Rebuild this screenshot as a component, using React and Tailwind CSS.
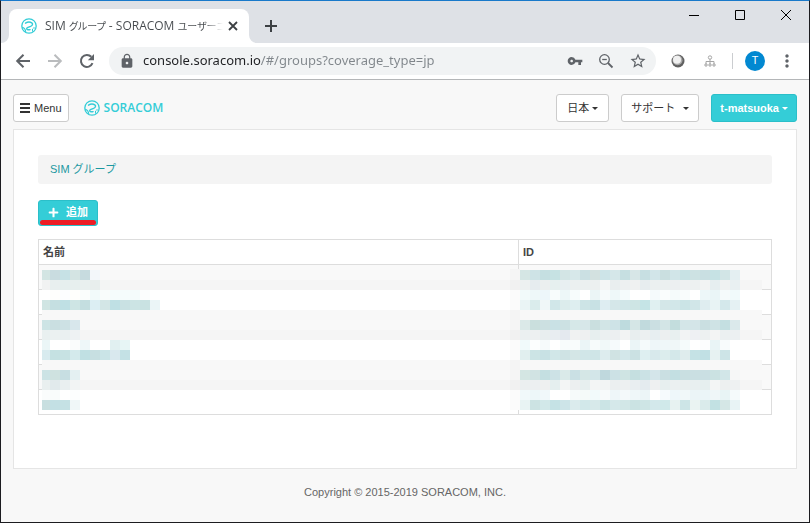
import React from 'react';
import { MdLock, MdVpnKey, MdStarBorder, MdMoreVert } from 'react-icons/md';
import { FaPlus } from 'react-icons/fa';

const JP = "font-['Liberation_Sans','Noto_Sans_CJK_JP',sans-serif]";

function SoracomMark() {
  return (
    <svg viewBox="0 0 16 16" className="size-4 shrink-0" fill="none" stroke="#34cdd7" strokeLinecap="round" aria-hidden="true">
      <circle cx="8" cy="8" r="7.2" strokeWidth="1.3" />
      <path d="M4.500 5.200C6.300 4 9.300 3.900 10.800 4.900c1.500 1.200.6 2.700-1.200 3.500L6.400 9.700c-1.200.7-.8 1.900.4 2 .9.1 1.600.1 2.300-.1" strokeWidth="1.400" />
      <path d="M1.500 9.300c1.900.6 3 2.200 3.300 4.700" strokeWidth="1.100" />
      <path d="M11.500 11.200v2M13 9.500v1" strokeWidth="1" />
    </svg>
  );
}

function StrokeIcon({ d, className, width = 1.8 }) {
  return (
    <svg viewBox="0 0 20 20" className={className} fill="none" stroke="currentColor" strokeWidth={width} aria-hidden="true">
      <path d={d} />
    </svg>
  );
}

function Caret() {
  return <span className="border-x-[3px] border-t-[3px] border-x-transparent border-t-current" />;
}

function TabStrip() {
  return (
    <div className="flex h-[42px] items-end bg-[#dee1e6]">
      <svg className="size-2 shrink-0" viewBox="0 0 8 8" fill="#fff" aria-hidden="true">
        <path d="M8 0v8H0a8 8 0 0 0 8-8z" />
      </svg>
      <div className="flex h-[34px] w-60 min-w-0 items-center rounded-t-lg bg-white px-3">
        <SoracomMark />
        <div className="ml-2 w-[178px] shrink-0 whitespace-nowrap bg-gradient-to-r from-[#45494d] from-90% to-transparent bg-clip-text font-['Open_Sans','Noto_Sans_CJK_JP',sans-serif] text-[12px] text-transparent [font-feature-settings:'palt']">
          SIM <span className="text-[10px]">グループ</span> - SORACOM <span className="text-[10px]">ユーザーコ</span>
        </div>
        <button type="button" aria-label="タブを閉じる" className="text-[#3c4043]">
          <StrokeIcon className="size-5" d="M6 6l8 8M14 6l-8 8" />
        </button>
      </div>
      <svg className="size-2 shrink-0" viewBox="0 0 8 8" fill="#fff" aria-hidden="true">
        <path d="M0 0v8h8a8 8 0 0 1-8-8z" />
      </svg>
      <button type="button" aria-label="新しいタブ" className="mb-[7px] ml-1 text-[#3c4043]">
        <StrokeIcon className="size-5" width={2} d="M10 4v12M4 10h12" />
      </button>
      <div className="ml-auto flex self-start text-black">
        <button type="button" aria-label="最小化" className="flex h-7 w-[46px] items-center justify-center">
          <svg viewBox="0 0 10 10" className="size-2.5" stroke="currentColor" aria-hidden="true">
            <path d="M0 5.500h10" />
          </svg>
        </button>
        <button type="button" aria-label="最大化" className="flex h-7 w-[46px] items-center justify-center">
          <svg viewBox="0 0 10 10" className="size-2.5" stroke="currentColor" fill="none" aria-hidden="true">
            <path d="M.5.5h9v9h-9z" />
          </svg>
        </button>
        <button type="button" aria-label="閉じる" className="flex h-7 w-[46px] items-center justify-center">
          <svg viewBox="0 0 10 10" className="size-2.5" stroke="currentColor" aria-hidden="true">
            <path d="M0 0l10 10M10 0L0 10" />
          </svg>
        </button>
      </div>
    </div>
  );
}

function Toolbar() {
  return (
    <div className="flex h-[37px] items-center border-b border-[#b4b6b8] bg-white pl-3 pr-3 text-[#5f6368]">
      <button type="button" aria-label="戻る">
        <StrokeIcon className="size-5" width={2} d="M17 10H4.500M10.500 3.700L4.200 10l6.300 6.300" />
      </button>
      <button type="button" aria-label="進む" className="ml-3 text-[#babcbe]">
        <StrokeIcon className="size-5" width={2} d="M3 10h12.500M9.500 3.700l6.300 6.300-6.300 6.300" />
      </button>
      <button type="button" aria-label="再読み込み" className="ml-3">
        <svg viewBox="0 0 20 20" className="size-5" aria-hidden="true">
          <path d="M15.500 12.200A6 6 0 1 1 14.300 5.800" fill="none" stroke="currentColor" strokeWidth="2" />
          <path d="M17 3v6.200h-6.200z" fill="currentColor" />
        </svg>
      </button>
      <div className="ml-3 flex h-7 min-w-0 flex-1 items-center rounded-full bg-[#f1f3f4] pl-2.5 pr-[9px]">
        <MdLock className="size-4 shrink-0" />
        <input
          type="text"
          aria-label="アドレス"
          defaultValue="console.soracom.io/#/groups?coverage_type=jp"
          className="ml-2 min-w-0 flex-1 bg-gradient-to-r from-[#202124] from-[118px] to-[#80868b] to-[118px] bg-clip-text font-['Noto_Sans',sans-serif] text-[13px] text-transparent outline-none"
        />
        <div className="flex shrink-0 items-center gap-[15px]">
          <button type="button" aria-label="パスワード">
            <MdVpnKey className="size-4" />
          </button>
          <button type="button" aria-label="ズーム">
            <svg viewBox="0 0 16 16" className="size-4" fill="none" stroke="currentColor" strokeWidth="1.300" aria-hidden="true">
              <circle cx="6.500" cy="6.500" r="4.800" />
              <path d="M10 10l4.500 4.500" strokeWidth="1.800" />
              <path d="M4.200 6.500h4.600" />
            </svg>
          </button>
          <button type="button" aria-label="ブックマーク">
            <MdStarBorder className="size-[18px]" />
          </button>
        </div>
      </div>
      <button type="button" aria-label="拡張機能" className="ml-3.5">
        <svg viewBox="0 0 16 16" className="size-4" aria-hidden="true">
          <circle cx="8" cy="8" r="6.500" fill="#606060" />
          <circle cx="7.500" cy="7.200" r="5" fill="#a8a8a8" />
          <circle cx="7" cy="6.700" r="4" fill="#f0f0f0" />
        </svg>
      </button>
      <button type="button" aria-label="サイト構成" className="ml-4">
        <svg viewBox="0 0 16 16" className="size-4" fill="none" stroke="#a6a6a6" aria-hidden="true">
          <circle cx="8" cy="4.500" r="1.700" />
          <path d="M8 6v5M4 11V8.500h8V11" />
          <path d="M3 11h2v2H3zM7 11h2v2H7zM11 11h2v2h-2z" />
        </svg>
      </button>
      <div className="ml-3.5 h-4 w-px bg-[#cbcdd0]" />
      <button
        type="button"
        className="ml-3 size-5 rounded-full bg-[#0288d1] font-[Roboto,sans-serif] text-[11px] leading-5 text-white"
      >
        T
      </button>
      <button type="button" aria-label="メニュー" className="ml-3">
        <MdMoreVert className="size-5" />
      </button>
    </div>
  );
}

const MENU_BUTTON = 'flex h-7 items-center rounded-[3px] border border-[#ccc] bg-white text-[#333]';

function SiteHeader() {
  return (
    <header className="flex items-center pt-[14px] pb-[7px]">
      <button type="button" className={`${MENU_BUTTON} gap-1 px-[6px]`}>
        <svg viewBox="0 0 10 10" className="size-2.5" stroke="currentColor" strokeWidth="2" aria-hidden="true">
          <path d="M0 1h10M0 5h10M0 9h10" />
        </svg>
        Menu
      </button>
      <a href="#/" className="ml-[15px] flex items-center gap-1 font-['Open_Sans',sans-serif] text-[12px] font-semibold text-[#34cdd7]">
        <SoracomMark />
        SORACOM
      </a>
      <div className="ml-auto flex gap-3">
        <button type="button" aria-haspopup="true" className={`${MENU_BUTTON} gap-[3px] px-[10px]`}>
          日本
          <Caret />
        </button>
        <button type="button" aria-haspopup="true" className={`${MENU_BUTTON} gap-2 px-[9px]`}>
          サポート
          <Caret />
        </button>
        <button
          type="button"
          aria-haspopup="true"
          className="flex h-7 items-center gap-[3px] rounded-[3px] border border-[#2bbfc9] bg-[#34cdd7] px-2 font-bold text-white"
        >
          t-matsuoka
          <Caret />
        </button>
      </div>
    </header>
  );
}

const BANDS = [
  '#f9f9f9', '#f5f5f5', '#ffffff', '#ffffff', '#f8f8f8', '#f9f9f9', '#f5f5f5',
  '#ffffff', '#ffffff', '#f8f8f8', '#f9f9f9', '#f5f5f5', '#ffffff', '#ffffff',
];

const NAME_CELLS = [
  'd3e5e3 c9dce0 c6e1e5 d4e4e3 c7dbdf f3f7fa',
  'f1f2f2 e8efef e6efee e7efee e9f0ef e8eeed f3f5f4',
  'ffffff fefefc fcfdff fffffc fafdfc f2fafa f9fcfb f5fcfc f5fcfc f4fbfb fbfdfd',
  'd0e5e3 c5dfe1 bfe0e4 cee5e4 c4dee0 dceef3 d3e6e6 bfe0e4 c9e1e3 cce4e4 c9e2e2 ebf5f7',
  '',
  'cde4e5 cadfe1 cde1e4 d8e7ec',
  'e9f0f0 ebf1f1 eaf0f1 eef2f3',
  'ebf6f7 ffffff ffffff fafcfc eef7f9 ffffff ffffff e1f0f1 e7f5f5',
  'd8ebef c5e1e2 c7e2e3 d4eaec c0e0e3 c7dfe1 cae4e7 d9e8ee c4e1e5',
  '',
  'cce3e5 cfe2e0 c7dee2 e4f0f2',
  'e9efef e1eaec e9eff0 f2f4f4',
  'fafcfc f9fcfb ffffff fcfefe',
  'c8dfe0 c3e0e4 c5e1e4 f0f7f8',
];

const ID_CELLS = [
  'd5e6e4 cee3e6 c5dfe1 c6e2e3 d3e5e5 d7e8ea cbe0e3 d3e1e0 cde4e8 d5e7e9 c6dfe1 d7e6e7 c7dfe2 d2e5e9 cadfe0 d1e5e8 c8e2e4 cde2e3 c9dfe2 c6e2e4 d2e5e6 e4eff2',
  'edf1f1 e6ecef ebefef e6f0ef e8eff2 ebf0f0 ebf0f0 ecf0f0 f4f6f6 e9eeef edf0f1 eff1f1 e7edef ebf0f0 ebf0f0 eceff1 eef1f2 edf1f1 f2f3f3 e6eef0 eff2f2 e9f0f2',
  'f2fafa eef8f9 edf6fa f8fcfc edf7f8 f7fcfc ffffff ebf5f6 f6fafb eef8f9 f5fbfc ffffff ffffff f5fafc fafdfd f5fbfb f9fcfc ffffff edf7f9 eaf5f7 f5fafb f1fafb',
  'eaf4f5 daecec f0f7f8 d1e7e9 dcecec deeef0 cde4e6 c8e1e4 deedf2 d5e7e9 d1e6e8 cee5e4 c5e4e6 e0f0f1 d4e7e8 d2e7e9 cbe4e6 d1e6e8 dfedf0 e8f3f4 d4e8eb e5f1f3',
  '',
  'dbe9e8 cadfdd cce0e1 c9e1e5 cce1e3 d6e8e8 d7e7e9 cadfdf d2e5e6 cee3e7 bedbde d5e6e6 c1dadd cbdfe2 d3e5e6 c3dddd d4e6e8 d4e5e8 cadfe1 cfe3e5 c4dfe1 dbe9eb',
  'ebf0f1 edf0f1 e8eeef e8edf1 e4e9ef f0f2f2 eef0f1 e7efef ebf0f1 eceff1 f2f3f3 e8eeef ecf0f1 e7eef1 eceff0 e8f0f0 f2f3f4 eef0f3 edf1f1 f3f4f4 ebf0f1 ecf0f2',
  'f1fafb fcfefe f6fafb ffffff f8fcfc f9fcfc ebf5f7 f7fbfb f1f9f9 f6fafc ffffff ebf5f7 f5fafb eef6f9 eff7f9 f0f7f8 f5fbfb ffffff fcfdfe e9f4f6 f8fbfc',
  'e1efef cce4e5 c8e1e4 d1e7e8 cfe3e4 d4e6e6 d1e6e8 cfe5e7 ddecee d0e3e3 d3e7ea cbe1e3 deeff1 d8e9ec dceded d4e8ea dfeced c5e2e5 c1e0e4 e7f2f2 cde4e7',
  '',
  'd4e6e3 d1e3e3 c4dfe1 cde2e6 daeae9 cae0e4 d5e7e6 d3e6e9 bfd8dd cce1e5 cfe4e3 c5dfe0 cbe2e5 d4e5ea cadfe2 c3dfe2 c9dfe1 cadfe2 cadfe3 cbe2e2 d2e6e8 f6f7f7',
  'ebeff0 eceff1 eef0f0 e5efef f3f5f5 eceff0 e7efef f3f5f5 f2f4f4 ebeff0 edf0f1 e9eef1 e4ebef eef0f1 e7efef ebf0f1 e9efef e8eff0 e6efef f3f5f5 edf0f0 eef1f2',
  'f1f9fa edf7f9 f1f8fa ffffff ffffff f6fafa f5faf9 f2fafb f8fafb eef6f9 f4f9fa eff7f9 ecf5f7 ffffff f6fafd eef7fa f1f8f9 ebf4f7 ebf5f8 eff6f8 e8f4f5 f5fafb',
  'e8f3f3 cce3e3 d2e8e9 c5e2e5 cde4e8 dbebed d2e8ea d7e9ea cbe4e5 d5e8ea d2e7e7 cbe3e3 cee5e5 d3e8eb d0e9ea e7f2f1 cde5e7 eaf3f2 daebeb c2e1e3 d5e7e6 e8f3f5',
];

const cellsOf = (row) => (row ? row.split(' ') : []);

/* Pixelated cover that hides the group names and their IDs. */
function Mosaic() {
  return (
    <svg
      viewBox="0 0 720 141"
      preserveAspectRatio="none"
      shapeRendering="crispEdges"
      className="absolute left-1 right-[10px] top-[30px] h-[141px] w-[calc(100%-14px)]"
      aria-hidden="true"
    >
      {BANDS.map((fill, i) => (
        <g key={i}>
          <rect x="0" y={i === 0 ? 0 : i * 10 + 1} width="720" height={i === 0 ? 11 : 10} fill={fill} />
          <rect x="468" y={i === 0 ? 0 : i * 10 + 1} width="10" height={i === 0 ? 11 : 10} fill="#000" opacity="0.014" />
          {cellsOf(NAME_CELLS[i]).map((c, k) => (
            <rect key={k} x={k === 0 ? 0 : k * 10 - 2} y={i * 10 + 1} width={k === 0 ? 8 : 10} height="10" fill={`#${c}`} />
          ))}
          {cellsOf(ID_CELLS[i]).map((c, k) => (
            <rect key={`d${k}`} x={478 + k * 10} y={i * 10 + 1} width="10" height="10" fill={`#${c}`} />
          ))}
        </g>
      ))}
    </svg>
  );
}

function GroupTable() {
  return (
    <div className="relative mt-[13px]">
      <table className="w-full table-fixed border-collapse text-left text-[#444]">
        <thead>
          <tr className="h-[25px]">
            <th scope="col" className="w-[480px] border border-[#ddd] px-1 py-0">
              名前
            </th>
            <th scope="col" className="border border-[#ddd] px-1 py-0">
              ID
            </th>
          </tr>
        </thead>
        <tbody>
          {[0, 1, 2, 3, 4, 5].map((n) => (
            <tr key={n} className="h-[25px] odd:bg-[#f9f9f9]">
              <td className="border border-[#ddd] p-0" />
              <td className="border border-[#ddd] p-0" />
            </tr>
          ))}
        </tbody>
      </table>
      <Mosaic />
    </div>
  );
}

export default function App() {
  return (
    <div className="flex min-h-screen flex-col border border-[#1c1c20] border-t-[#1979ca] bg-[#f8f8f8]">
      <TabStrip />
      <Toolbar />
      <div className={`px-3 text-[11px] leading-4 ${JP}`}>
        <SiteHeader />
        <main className="border border-[#e5e5e5] bg-white px-6 pb-[53px] pt-[25px]">
          <nav aria-label="パンくず" className="flex h-[29px] items-center rounded-[3px] bg-[#f4f4f4] px-3 pb-0.5">
            <a href="#/groups" className="text-[#1b98a1]">
              SIM グループ
            </a>
          </nav>
          <div className="relative mt-4 w-fit">
            <button
              type="button"
              className="flex h-[26px] items-center gap-[7px] rounded-[3px] border border-[#2bbfc9] bg-[#34cdd7] px-[9px] pb-0.5 font-bold text-white"
            >
              <FaPlus className="size-[11px]" />
              追加
            </button>
            <span className="absolute inset-x-0.5 bottom-px h-[5px] rounded-full bg-[#ed1c24]" />
          </div>
          <GroupTable />
        </main>
        <footer className="py-[15px] text-center text-[#666]">Copyright © 2015-2019 SORACOM, INC.</footer>
      </div>
    </div>
  );
}
